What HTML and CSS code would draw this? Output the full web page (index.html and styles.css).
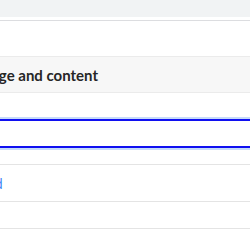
FILE: index.html
```html
<!DOCTYPE html>
<html lang="en">
<head>
  <meta charset="UTF-8" />
  <meta name="viewport" content="width=device-width, initial-scale=1.0" />
  <title>Settings</title>
  <link rel="stylesheet" href="styles.css">
</head>
<body>
  <div class="page">
    <div class="topbar"></div>
    <div class="panel">
      <div class="spacer"></div>
      <div class="section-head">Language and content</div>
      <div class="row short"></div>
      <div class="row focused" tabindex="0"></div>
      <div class="row thin"></div>
      <div class="row link-row"><a href="#" class="link">Advanced</a></div>
      <div class="row mid"></div>
      <div class="row"></div>
    </div>
  </div>
</body>
</html>
```

FILE: styles.css
```css
html, body {
  margin: 0;
  padding: 0;
  overflow: hidden;
  background: #fff;
  font-family: 'Open Sans', sans-serif;
  color: #202124;
}
.page {
  width: 330px;
  margin-left: -61px;
}
.topbar {
  height: 17px;
  background: #f1f3f4;
}
.panel {
  margin-top: 3px;
  border-top: 1px solid #dcdde0;
}
.spacer {
  height: 35px;
}
.section-head {
  height: 35px;
  display: flex;
  align-items: center;
  padding-left: 12px;
  background: #f7f7f7;
  border-top: 1px solid #ebebeb;
  border-bottom: 1px solid #ebebeb;
  font-family: Lato, 'Open Sans', sans-serif;
  font-size: 15px;
  font-weight: 700;
  color: #262626;
}
.row {
  height: 36px;
  border-bottom: 1px solid #e4e4e4;
  display: flex;
  align-items: center;
}
.row.short {
  height: 24px;
  border-bottom: none;
}
.row.focused {
  box-sizing: border-box;
  height: 29px;
  margin-top: 2px;
  border: 2px solid #1010f0;
  box-shadow: 0 0 0 2px #c6dbfa;
  outline: none;
}
.row.thin {
  height: 16px;
}
.row.mid {
  height: 26px;
}
.link {
  font-size: 14px;
  color: #3b82f6;
  text-decoration: none;
}
```
